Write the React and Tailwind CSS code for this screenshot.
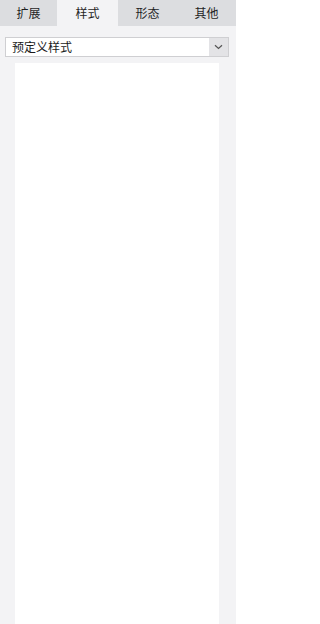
export default function App() {
  const tabs = [
    { label: "扩展", w: "w-[57px]", active: false },
    { label: "样式", w: "w-[61px]", active: true },
    { label: "形态", w: "w-[59px]", active: false },
    { label: "其他", w: "w-[59px]", active: false },
  ];
  return (
    <div
      className="w-[236px] h-[624px] bg-[#f3f3f5] flex flex-col overflow-hidden"
      style={{ fontFamily: '"Noto Sans CJK SC", "Noto Sans", sans-serif' }}
    >
      <div className="h-[26px] bg-[#dcdde0] flex shrink-0">
        {tabs.map((t) => (
          <div
            key={t.label}
            className={`${t.w} flex items-center justify-center text-[12px] text-[#1f1f1f] ${
              t.active ? "bg-[#f3f3f5]" : ""
            }`}
          >
            {t.label}
          </div>
        ))}
      </div>
      <div className="pt-[11px] px-[5px] shrink-0">
        <div className="h-[20px] w-[224px] border border-[#cfcfd2] bg-white flex">
          <div className="flex-1 flex items-center pl-[6px] text-[12px] text-[#1a1a1a] leading-none">
            预定义样式
          </div>
          <div className="w-[19px] bg-[#e3e3e6] flex items-center justify-center">
            <svg width="9" height="6" viewBox="0 0 9 6">
              <path d="M1 1.2 L4.5 4.5 L8 1.2" fill="none" stroke="#555" strokeWidth="1.2" />
            </svg>
          </div>
        </div>
      </div>
      <div className="mt-[6px] ml-[15px] w-[204px] flex-1 bg-white" />
    </div>
  );
}
